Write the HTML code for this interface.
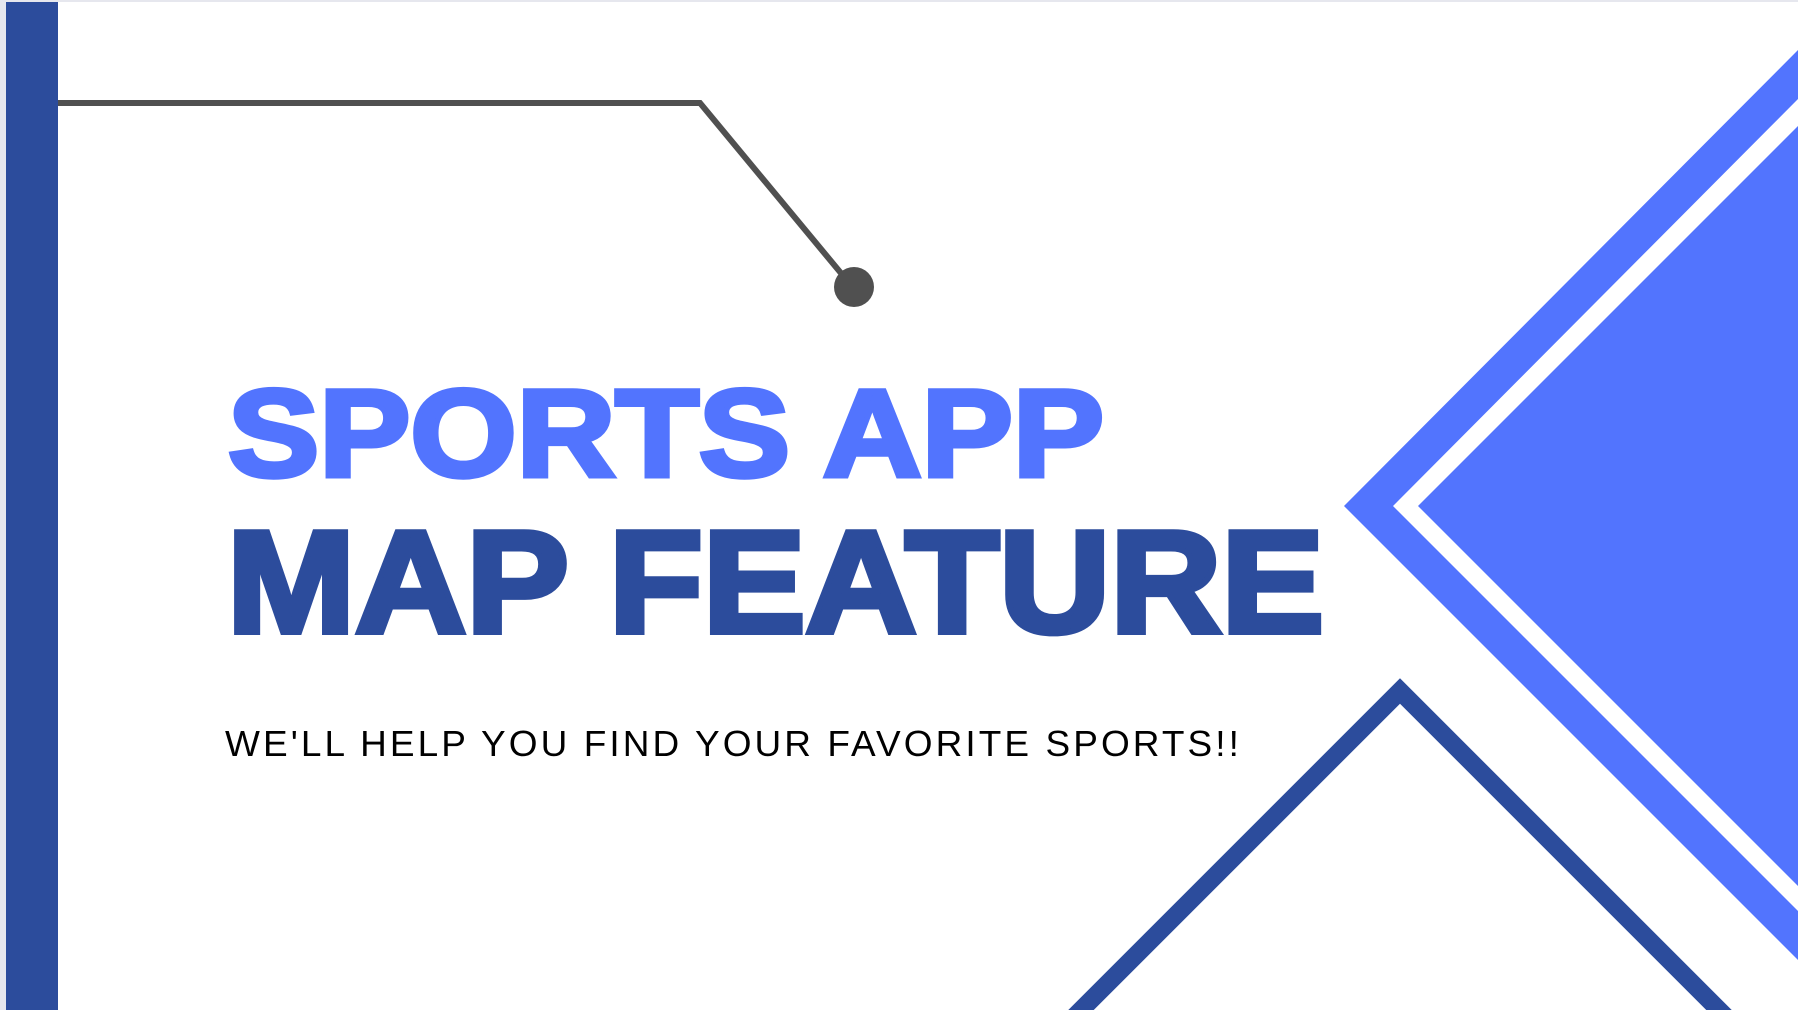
<!DOCTYPE html>
<html><head><meta charset="utf-8"><style>
html,body{margin:0;padding:0;background:#fff;width:1798px;height:1010px;overflow:hidden}
svg{display:block}
</style></head><body>
<svg width="1798" height="1010" viewBox="0 0 1798 1010" xmlns="http://www.w3.org/2000/svg">
<rect width="1798" height="1010" fill="#fff"/>
<rect x="0" y="0" width="1798" height="2" fill="#e6e7ee"/>
<rect x="0" y="0" width="6" height="1010" fill="#e6e7ee"/>
<rect x="6" y="2" width="52" height="1008" fill="#2c4c9c"/>
<polyline points="58,103 700,103 845,278" fill="none" stroke="#505050" stroke-width="6"/>
<ellipse cx="854" cy="287" rx="20" ry="20" fill="#505050"/>
<polygon points="1798,50 1344,506 1798,960 1798,911 1393,506 1798,99" fill="#5274fe"/>
<polygon points="1798,126 1418,506 1798,886" fill="#5274fe"/>
<polyline points="1060,1031 1400,691 1740,1031" fill="none" stroke="#2c4c9c" stroke-width="18"/>
<text x="228" y="476" font-family="Liberation Sans, sans-serif" font-weight="bold" font-size="124" fill="#5274fe" textLength="876" lengthAdjust="spacingAndGlyphs" stroke="#5274fe" stroke-width="5">SPORTS APP</text>
<text x="227" y="632" font-family="Liberation Sans, sans-serif" font-weight="bold" font-size="145" fill="#2c4c9c" textLength="1097" lengthAdjust="spacingAndGlyphs" stroke="#2c4c9c" stroke-width="6">MAP FEATURE</text>
<text x="225" y="756" font-family="Liberation Sans, sans-serif" font-size="36" letter-spacing="3" fill="#000" textLength="1017" lengthAdjust="spacingAndGlyphs">WE'LL HELP YOU FIND YOUR FAVORITE SPORTS!!</text>
</svg>
</body></html>
